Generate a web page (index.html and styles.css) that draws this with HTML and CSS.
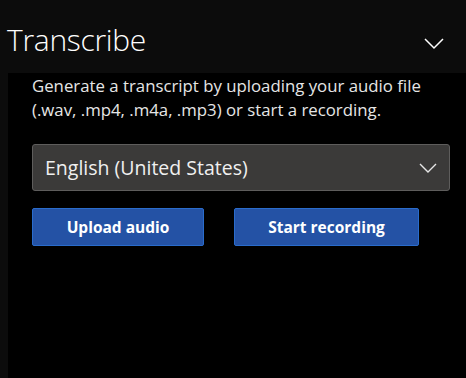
FILE: index.html
```html
<!DOCTYPE html>
<html>
<head>
<meta charset="utf-8">
<link rel="stylesheet" href="styles.css">
</head>
<body>
<div class="app">
  <header class="header">
    <h1 class="title">Transcribe</h1>
    <svg class="collapse" width="20" height="12" viewBox="0 0 20 12"><path d="M1 1 L10 10 L19 1" fill="none" stroke="#ffffff" stroke-width="1.5"/></svg>
  </header>
  <main class="panel">
    <p class="desc">Generate a transcript by uploading your audio file (.wav, .mp4, .m4a, .mp3) or start a recording.</p>
    <div class="select">
      <span class="select-text">English (United States)</span>
      <svg class="select-chev" width="18" height="10" viewBox="0 0 18 10"><path d="M1 1 L9 9 L17 1" fill="none" stroke="#e6e6e6" stroke-width="1.4"/></svg>
    </div>
    <div class="actions">
      <button class="btn btn-upload">Upload audio</button>
      <button class="btn btn-record">Start recording</button>
    </div>
  </main>
</div>
</body>
</html>
```
FILE: styles.css
```css
html, body {
  margin: 0;
  padding: 0;
  height: 100%;
  background: #0c0c0c;
}
body {
  font-family: "Open Sans", "Noto Sans", sans-serif;
  color: #ffffff;
  overflow: hidden;
}
.app {
  display: flex;
  flex-direction: column;
  height: 100%;
}
.header {
  height: 73px;
  display: flex;
  align-items: center;
  justify-content: space-between;
  padding: 0 22px 0 7px;
  box-sizing: border-box;
}
.title {
  margin: 0;
  font-weight: 300;
  font-size: 30px;
  letter-spacing: -0.3px;
  color: #ffffff;
  line-height: 1;
  padding-top: 6px;
}
.collapse {
  margin-top: 14px;
}
.panel {
  flex: 1;
  margin-left: 8px;
  background: #000000;
  padding: 0 16px 0 24px;
}
.desc {
  margin: 1px 0 0 0;
  max-width: 410px;
  font-size: 16.8px;
  line-height: 24px;
  color: #e6e6e6;
}
.select {
  margin-top: 22px;
  height: 47px;
  box-sizing: border-box;
  background: #3b3a39;
  border: 1px solid #5e5d5c;
  border-radius: 3px;
  display: flex;
  align-items: center;
  justify-content: space-between;
  padding: 0 12px 0 12px;
}
.select-text {
  font-size: 19.5px;
  color: #f0f0f0;
}
.actions {
  display: flex;
  gap: 30px;
  margin-top: 17px;
}
.btn {
  height: 38px;
  background: #2452a5;
  border: 1px solid #2a6ccc;
  border-radius: 2px;
  color: #ffffff;
  font-family: "Open Sans", "Noto Sans", sans-serif;
  font-weight: 700;
  font-size: 15.5px;
  padding: 0;
}
.btn-upload { width: 172px; }
.btn-record { width: 185px; }
```
